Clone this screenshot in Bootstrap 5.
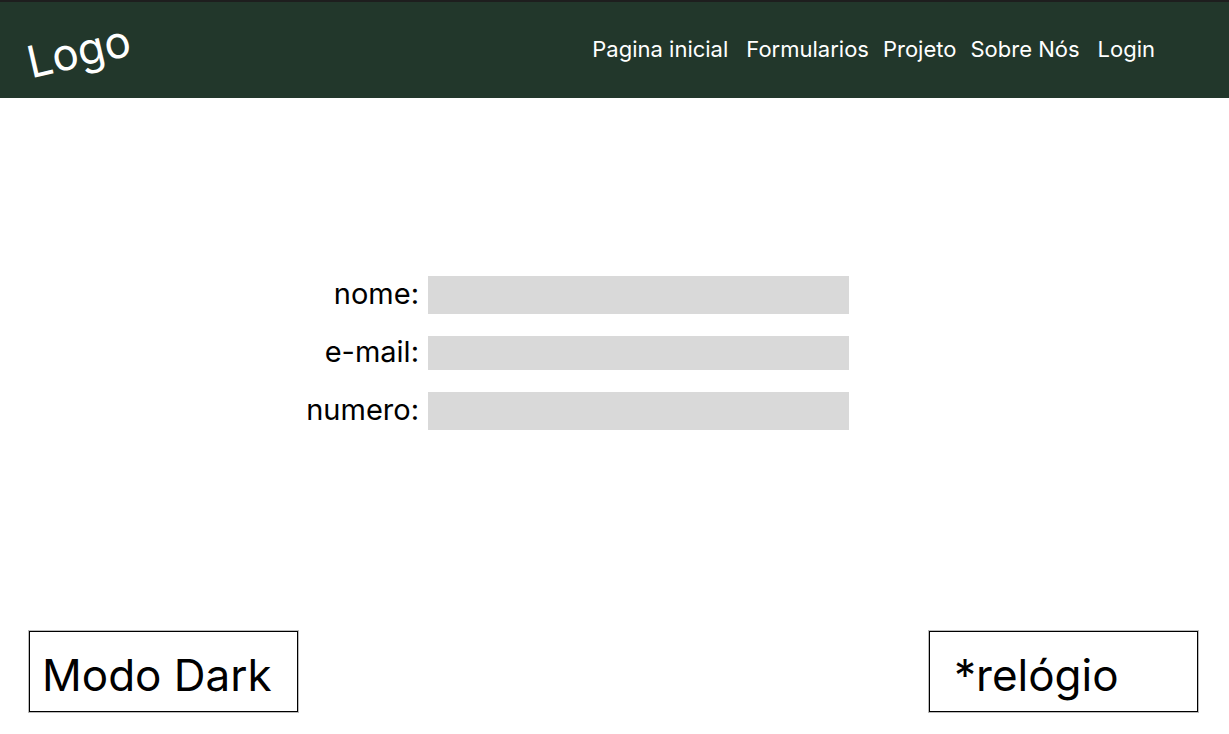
<!DOCTYPE html>
<html lang="pt-BR">
<head>
<meta charset="utf-8">
<meta name="viewport" content="width=device-width, initial-scale=1">
<title>Formularios</title>
<link href="https://cdn.jsdelivr.net/npm/bootstrap@5.3.0/dist/css/bootstrap.min.css" rel="stylesheet">
<style>
body { font-family: Inter, sans-serif; color: #000; background: #fff; }
.topbar { background: #22372b; border-top: 2px solid #1e1e1e; padding: 20px 74px 22px 26px; }
.logo { color: #fff; font-size: 44px; line-height: 54px; padding-top: 2px; margin-bottom: -2px; transform: rotate(-13deg); }
.topbar .nav-link { color: #fff; font-size: 22px; line-height: 28px; padding: 0; }
.links { gap: 14px; }
.form-area { padding-bottom: 24px; }
.fields { width: 100%; max-width: 619px; padding-right: 75px; gap: 22px; }
.fields label { font-size: 29px; line-height: 32px; width: 115px; padding: 0 1px 2px 0; }
.field { background: #d9d9d9; height: 38px; min-width: 0; }
.field-short { height: 34px; }
.bottom { padding: 0 31px 22px 29px; }
.box { width: 269px; border: 1px solid #000; box-shadow: 0 0 0 1px #bbb; background: #fff; color: #000; font-size: 44px; line-height: 54px; padding: 16px 12px 9px; }
.clock { padding-left: 24px; }
</style>
</head>
<body class="d-flex flex-column min-vh-100">
<header class="topbar d-flex align-items-center justify-content-between">
  <a class="logo text-decoration-none" href="#">Logo</a>
  <nav class="nav links" aria-label="Principal">
    <a class="nav-link" href="#">Pagina inicial</a>
    <a class="nav-link ms-1" href="#">Formularios</a>
    <a class="nav-link" href="#">Projeto</a>
    <a class="nav-link" href="#">Sobre Nós</a>
    <a class="nav-link ms-1" href="#">Login</a>
  </nav>
</header>
<main class="form-area flex-grow-1 d-flex justify-content-center align-items-center">
  <form class="fields d-flex flex-column">
    <div class="d-flex align-items-center gap-2"><label for="nome" class="text-end flex-shrink-0">nome:</label><input id="nome" type="text" class="field flex-grow-1 border-0 rounded-0"></div>
    <div class="d-flex align-items-center gap-2"><label for="email" class="text-end flex-shrink-0">e-mail:</label><input id="email" type="email" class="field field-short flex-grow-1 border-0 rounded-0"></div>
    <div class="d-flex align-items-center gap-2"><label for="numero" class="text-end flex-shrink-0">numero:</label><input id="numero" type="tel" class="field flex-grow-1 border-0 rounded-0"></div>
  </form>
</main>
<footer class="bottom d-flex justify-content-between">
  <button type="button" class="box text-start">Modo Dark</button>
  <div class="box clock">*relógio</div>
</footer>
<script src="https://cdn.jsdelivr.net/npm/bootstrap@5.3.0/dist/js/bootstrap.bundle.min.js"></script>
</body>
</html>
